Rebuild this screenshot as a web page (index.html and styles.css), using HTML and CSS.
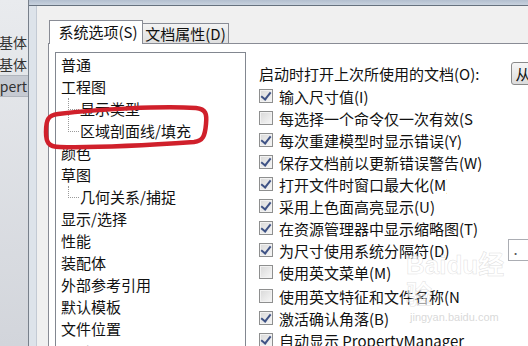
FILE: index.html
```html
<!DOCTYPE html>
<html lang="zh-CN">
<head>
    <meta charset="UTF-8">
    <title>系统选项</title>
    <link rel="stylesheet" href="styles.css">
</head>
<body>

    <div class="screen">
        <!-- window behind the dialog -->
        <aside class="behind">
            <div class="behind-row">实体基体</div>
            <div class="behind-row">钣金基体</div>
            <div class="behind-row selected">Expert</div>
        </aside>

        <div class="window">
            <div class="titlebar"></div>
            <div class="window-body">
                <div class="frame"></div>
                <div class="dialog">
                    <div class="tabs">
                        <div class="tab active">系统选项(S)</div>
                        <div class="tab">文档属性(D)</div>
                    </div>

                    <div class="panel">
                        <ul class="tree">
                            <li>普通</li>
                            <li>工程图</li>
                            <li class="child first">显示类型</li>
                            <li class="child">区域剖面线/填充</li>
                            <li>颜色</li>
                            <li>草图</li>
                            <li class="child first">几何关系/捕捉</li>
                            <li>显示/选择</li>
                            <li>性能</li>
                            <li>装配体</li>
                            <li>外部参考引用</li>
                            <li>默认模板</li>
                            <li>文件位置</li>
                            <li>FeatureManager</li>
                        </ul>

                        <div class="options">
                            <div class="opt-row top-row">
                                <span>启动时打开上次所使用的文档(O):</span>
                                <span class="combo">从不</span>
                            </div>
                            <div class="opt-row checked"><span class="box"></span><span>输入尺寸值(I)</span></div>
                            <div class="opt-row"><span class="box"></span><span class="label cut-s">每选择一个命令仅一次有效(S)</span></div>
                            <div class="opt-row checked"><span class="box"></span><span>每次重建模型时显示错误(Y)</span></div>
                            <div class="opt-row checked"><span class="box"></span><span>保存文档前以更新错误警告(W)</span></div>
                            <div class="opt-row checked"><span class="box"></span><span class="label cut-m">打开文件时窗口最大化(M)</span></div>
                            <div class="opt-row checked"><span class="box"></span><span>采用上色面高亮显示(U)</span></div>
                            <div class="opt-row checked"><span class="box"></span><span>在资源管理器中显示缩略图(T)</span></div>
                            <div class="opt-row checked"><span class="box"></span><span>为尺寸使用系统分隔符(D)</span><span class="field">.</span></div>
                            <div class="opt-row"><span class="box"></span><span>使用英文菜单(M)</span></div>
                            <div class="opt-row spaced"><span class="box"></span><span class="label cut-n">使用英文特征和文件名称(N)</span></div>
                            <div class="opt-row checked"><span class="box"></span><span>激活确认角落(B)</span></div>
                            <div class="opt-row checked"><span class="box"></span><span>自动显示 PropertyManager</span></div>
                        </div>
                    </div>
                </div>
            </div>
        </div>
    </div>

    <!-- hand drawn red mark around the tree item -->
    <svg class="marker" width="528" height="346" viewBox="0 0 528 346">
        <path d="M58 114 C100 109, 160 106, 196 108 C206 109, 207 114, 206 124 C205 136, 203 141, 194 142 C150 145, 100 148, 60 147 C48 147, 46 142, 46 132 C46 120, 48 115, 58 114 Z"
              fill="none" stroke="#d0202b" stroke-width="4.5" stroke-linejoin="round"/>
    </svg>

    <div class="watermark">
        <div class="wm-logo">Baidu经验</div>
        <div class="wm-url">jingyan.baidu.com</div>
    </div>

</body>
</html>
```

FILE: styles.css
```css
/* Global */
* {
    box-sizing: border-box;
}

body {
    margin: 0;
    width: 528px;
    height: 346px;
    overflow: hidden;
    position: relative;
    font-family: "Noto Sans CJK SC", sans-serif;
    font-size: 15px;
    color: #111;
    background: #f0f0f0;
}

.screen {
    display: flex;
    height: 346px;
}

/* Window behind */
.behind {
    width: 29px;
    flex-shrink: 0;
    padding-top: 31px;
    border-right: 1px solid #78808b;
    background: linear-gradient(#e9ebee, #d2d5db);
    font-size: 14px;
    color: #333;
}

.behind-row {
    height: 22px;
    line-height: 22px;
    display: flex;
    justify-content: flex-end;
    overflow: hidden;
    white-space: nowrap;
    padding-right: 1px;
}

.behind-row.selected {
    background: #c6cad2;
    border-top: 1px solid #b0b5bd;
    border-bottom: 1px solid #b0b5bd;
    line-height: 20px;
}

/* Dialog window */
.window {
    flex: 1;
    min-width: 0;
    display: flex;
    flex-direction: column;
}

.titlebar {
    height: 6px;
    flex-shrink: 0;
    background: linear-gradient(#b3bfcf, #c8d2de);
    border-bottom: 1px solid #66717e;
}

.window-body {
    flex: 1;
    min-height: 0;
    display: flex;
}

.frame {
    width: 8px;
    flex-shrink: 0;
    background: #dde3ea;
    border-right: 1px solid #c3cad4;
}

.dialog {
    flex: 1;
    min-width: 0;
    display: flex;
    flex-direction: column;
    padding: 14px 0 0 11px;
    background: #f0f0f0;
}

/* Tabs */
.tabs {
    display: flex;
    align-items: flex-end;
    height: 24px;
    padding-left: 1px;
}

.tab {
    width: 86px;
    height: 21px;
    line-height: 19px;
    text-align: center;
    border: 1px solid #898c95;
    border-left: none;
    border-bottom: none;
    background: linear-gradient(#f3f3f3, #dedede);
    white-space: nowrap;
}

.tab.active {
    width: 94px;
    height: 24px;
    line-height: 22px;
    padding-left: 4px;
    border-left: 1px solid #898c95;
    background: #fff;
    position: relative;
    z-index: 1;
}

.panel {
    flex: 1;
    min-height: 0;
    display: flex;
    margin-top: -1px;
    padding: 8px 0 0 6px;
    background: #fff;
    border-top: 1px solid #898c95;
    border-left: 1px solid #898c95;
    overflow: hidden;
}

/* Tree */
.tree {
    list-style: none;
    margin: 0;
    width: 191px;
    flex-shrink: 0;
    padding: 1px 0 0 5px;
    border: 1px solid #828790;
    border-bottom: none;
    white-space: nowrap;
}

.tree li {
    height: 22px;
    line-height: 22px;
    position: relative;
}

.tree .child {
    padding-left: 19px;
}

.tree .child::before {
    content: "";
    position: absolute;
    left: 7px;
    top: -11px;
    width: 10px;
    height: 22px;
    border-left: 1px dotted #9a9a9a;
    border-bottom: 1px dotted #9a9a9a;
}

.tree .child.first::before {
    top: 0;
    height: 11px;
}

/* Options */
.options {
    flex: 1;
    margin-left: 13px;
    padding-top: 9px;
    white-space: nowrap;
}

.opt-row {
    display: flex;
    align-items: center;
    height: 22px;
}

.opt-row.top-row {
    height: 24px;
}

.opt-row.spaced {
    margin-top: 2px;
}

.combo {
    flex-shrink: 0;
    width: 50px;
    height: 23px;
    line-height: 21px;
    margin-left: 32px;
    padding-left: 3px;
    border: 1px solid #8a8a8a;
    border-radius: 3px;
    background: linear-gradient(#f6f6f6, #dcdcdc);
}

.field {
    flex-shrink: 0;
    width: 40px;
    height: 22px;
    line-height: 18px;
    margin-left: 59px;
    padding-left: 4px;
    border: 1px solid #abadb3;
    color: #555;
}

.box {
    width: 14px;
    height: 14px;
    flex-shrink: 0;
    margin-right: 6px;
    display: flex;
    align-items: center;
    justify-content: center;
    border: 1px solid #8e8f8f;
    background: linear-gradient(135deg, #d8d8d8, #f7f7f7);
    box-shadow: inset 0 0 0 1px #f2f2f2;
}

.checked .box::after {
    content: "";
    width: 4px;
    height: 8px;
    margin-top: -2px;
    border: solid #3e5285;
    border-width: 0 2px 2px 0;
    transform: rotate(38deg);
}

.label {
    display: inline-block;
    overflow: hidden;
}

.cut-s {
    width: 194px;
}

.cut-m {
    width: 168px;
}

.cut-n {
    width: 181px;
}

/* Overlays */
.marker {
    position: absolute;
    left: 0;
    top: 0;
    pointer-events: none;
}

.watermark {
    position: absolute;
    left: 406px;
    top: 250px;
    color: rgba(255, 255, 255, 0.6);
    -webkit-text-stroke: 0.5px rgba(200, 200, 200, 0.6);
    pointer-events: none;
}

.wm-logo {
    font-family: "Liberation Sans", "Noto Sans CJK SC", sans-serif;
    font-size: 26px;
    font-weight: bold;
    line-height: 30px;
}

.wm-url {
    font-family: "Liberation Sans", sans-serif;
    font-size: 11px;
    line-height: 14px;
    padding-left: 4px;
    color: rgba(200, 200, 200, 0.7);
    -webkit-text-stroke: 0;
}
```
